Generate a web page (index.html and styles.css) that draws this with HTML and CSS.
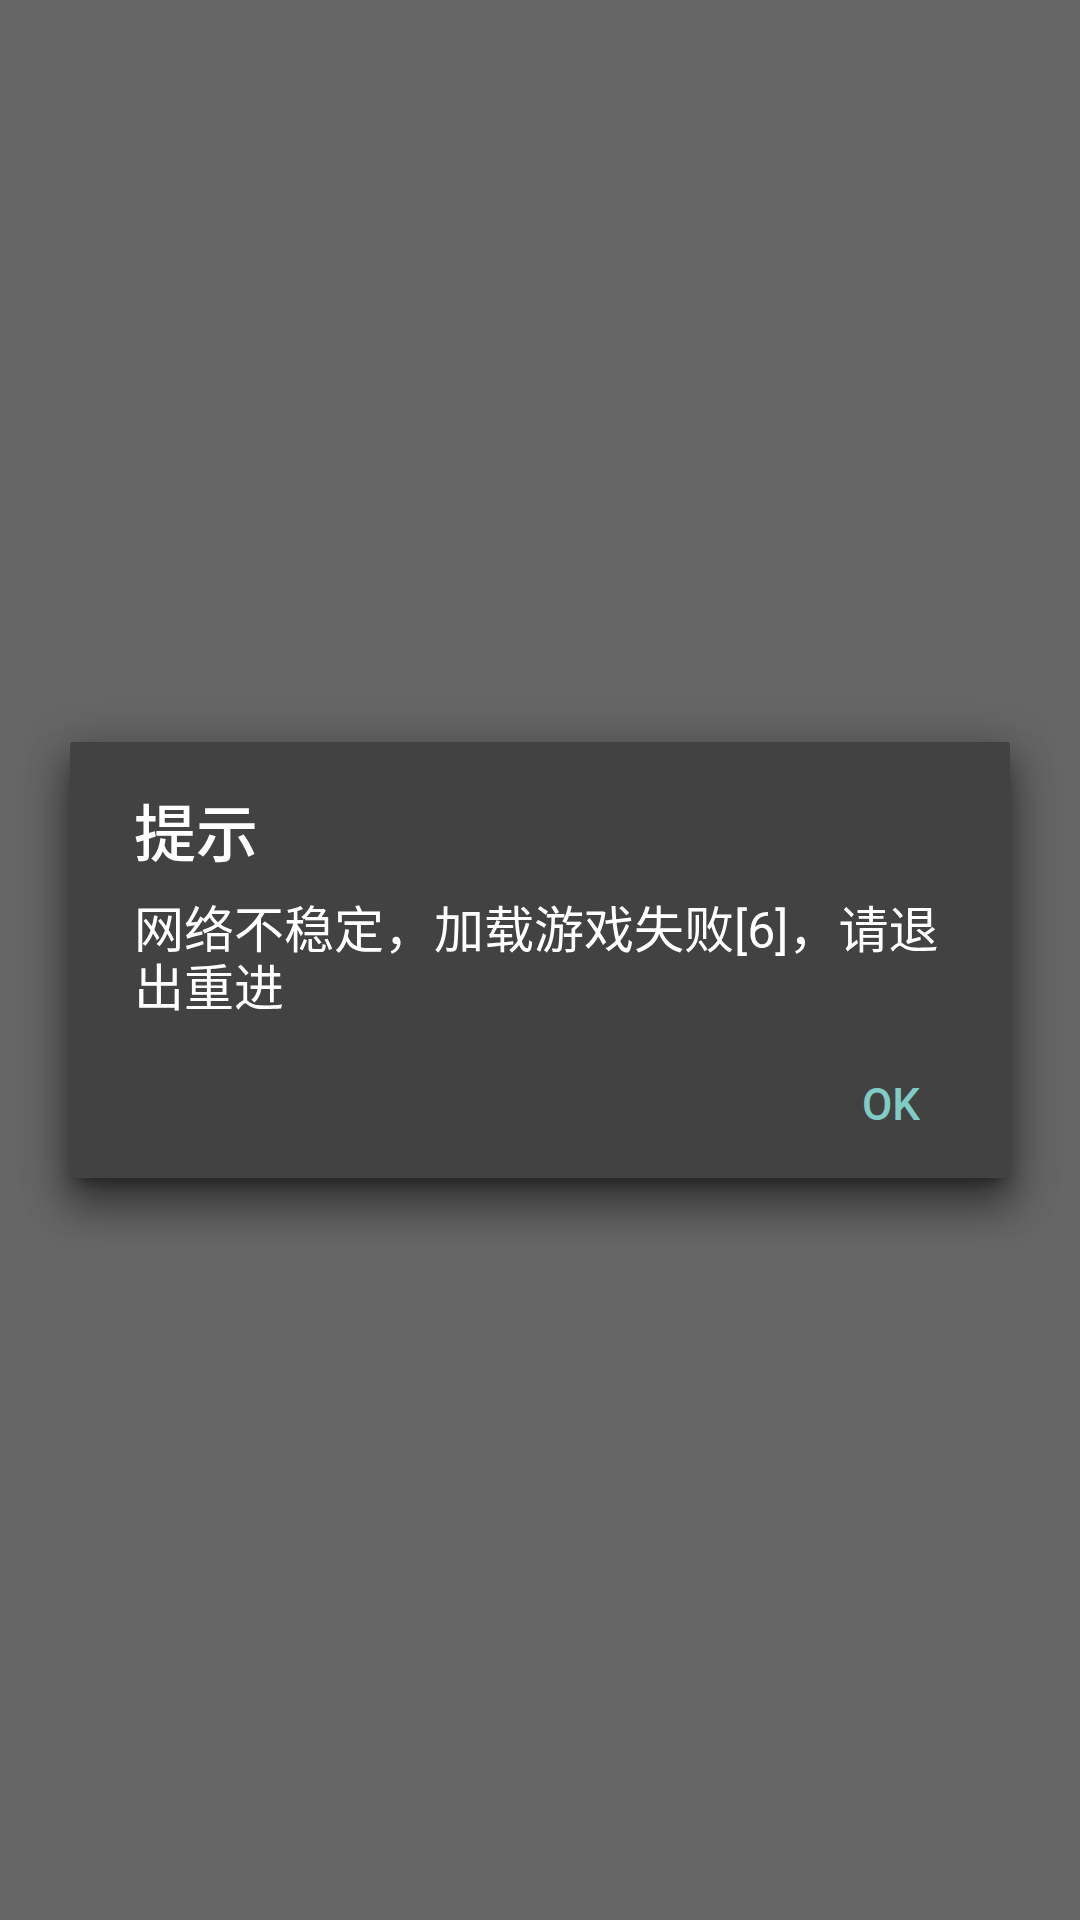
FILE: index.html
```html
<!DOCTYPE html>
<html lang="zh-CN">
<head>
<meta charset="utf-8">
<link rel="stylesheet" href="styles.css">
</head>
<body>
<div class="screen">
  <div class="dialog">
    <div class="title">提示</div>
    <div class="message">网络不稳定，加载游戏失败[6]，请退出重进</div>
    <div class="actions">
      <span class="btn">OK</span>
    </div>
  </div>
</div>
</body>
</html>
```
FILE: styles.css
```css
html, body {
  margin: 0;
  padding: 0;
  background: #666666;
}
.screen {
  width: 1080px;
  height: 1920px;
  display: flex;
  flex-direction: column;
  padding-top: 742px;
  padding-left: 70px;
  box-sizing: border-box;
}
.dialog {
  width: 940px;
  height: 436px;
  box-sizing: border-box;
  background: #424242;
  border-radius: 3px;
  padding: 58px 64px 0 64px;
  display: flex;
  flex-direction: column;
  box-shadow: 0 28px 40px 2px rgba(0,0,0,0.36), 0 9px 46px 8px rgba(0,0,0,0.22), 0 11px 15px -7px rgba(0,0,0,0.4);
  font-family: Roboto, "Noto Sans CJK SC", sans-serif;
  color: #ffffff;
}
.title {
  font-size: 62px;
  line-height: 72px;
  font-weight: 500;
}
.message {
  margin-top: 30px;
  font-size: 50px;
  line-height: 58px;
  font-weight: 400;
}
.actions {
  display: flex;
  justify-content: flex-end;
  margin-top: 61px;
  padding-right: 24px;
}
.btn {
  font-size: 44px;
  line-height: 52px;
  font-weight: 500;
  color: #80cbc4;
  padding-right: 2px;
}
```
